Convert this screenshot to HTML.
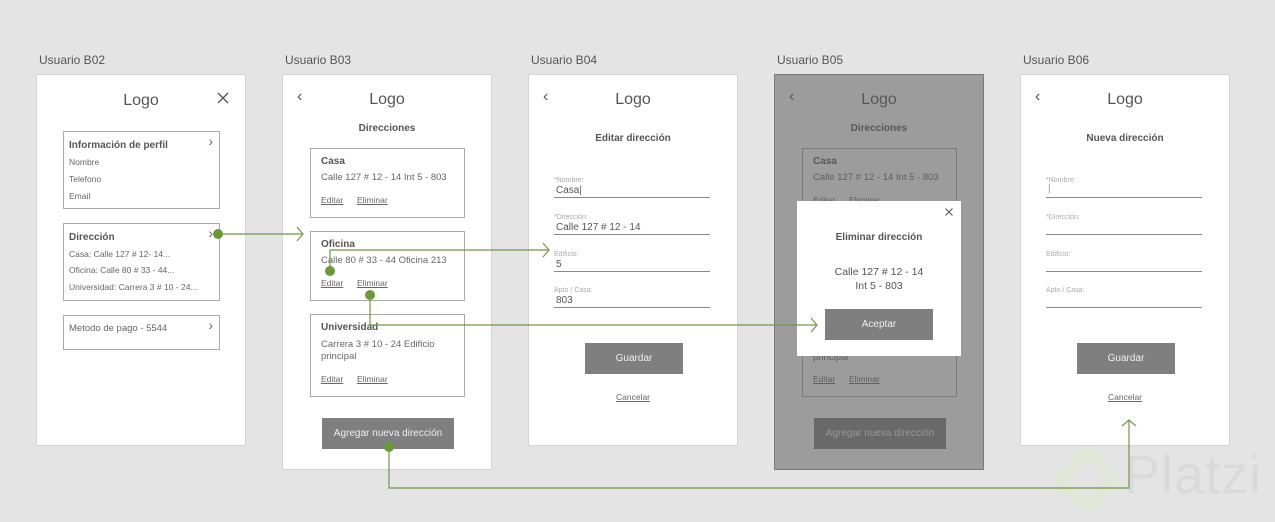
<!DOCTYPE html>
<html><head><meta charset="utf-8"><style>
*{margin:0;padding:0;box-sizing:border-box}
body{width:1275px;height:522px;background:#e4e4e4;font-family:"Liberation Sans",sans-serif;color:#555;position:relative;overflow:hidden}
.a{position:absolute}
.scr{position:absolute;background:#fff;border:1px solid #d4d4d4;width:210px}
.ttl{position:absolute;font-size:12px;color:#555;top:53px}
.logo{position:absolute;width:100%;text-align:center;font-size:16px;color:#555;top:16px}
.back{position:absolute;left:14px;top:13px;font-size:16px;color:#555}
.h{position:absolute;width:100%;text-align:center;font-size:10px;font-weight:bold;color:#555}
.card{position:absolute;border:1px solid #aaa;background:#fff}
.card b{position:absolute;font-size:10px;color:#555}
.t{position:absolute;font-size:9.5px;color:#666;white-space:nowrap}
.s{position:absolute;font-size:8.5px;color:#666;white-space:nowrap}
.u{text-decoration:underline;font-size:8.5px}
.btn{position:absolute;background:#7f7f7f;color:#eee;font-size:10px;text-align:center}
.f{position:absolute;left:25px;width:156px;border-bottom:1px solid #888;height:20px}
.f .l{position:absolute;left:0;top:-1px;font-size:7px;color:#aaa}
.f .v{position:absolute;left:2px;top:7px;font-size:10px;color:#555}
.chev{position:absolute;font-size:14px;color:#666;right:6px;top:1px}
</style></head><body>
<div class="ttl" style="left:39px">Usuario B02</div>
<div class="ttl" style="left:285px">Usuario B03</div>
<div class="ttl" style="left:531px">Usuario B04</div>
<div class="ttl" style="left:777px">Usuario B05</div>
<div class="ttl" style="left:1023px">Usuario B06</div>

<!-- B02 -->
<div class="scr" style="left:36px;top:74px;height:372px">
 <div class="logo" style="top:17px">Logo</div>
 <svg class="a" style="left:180px;top:17px" width="12" height="12"><path d="M1 1L11 11M11 1L1 11" stroke="#555" stroke-width="1.3"/></svg>
 <div class="card" style="left:26px;top:56px;width:157px;height:78px">
  <b style="left:5px;top:8px">Información de perfil</b><span class="chev">›</span>
  <div class="s" style="left:5px;top:25px">Nombre</div>
  <div class="s" style="left:5px;top:42px">Telefono</div>
  <div class="s" style="left:5px;top:59px">Email</div>
 </div>
 <div class="card" style="left:26px;top:148px;width:157px;height:78px">
  <b style="left:5px;top:8px">Dirección</b><span class="chev">›</span>
  <div class="s" style="left:5px;top:25px">Casa: Calle 127 # 12- 14...</div>
  <div class="s" style="left:5px;top:41px">Oficina: Calle 80 # 33 - 44...</div>
  <div class="s" style="left:5px;top:58px">Universidad: Carrera 3 # 10 - 24...</div>
 </div>
 <div class="card" style="left:26px;top:240px;width:157px;height:35px">
  <div class="t" style="left:5px;top:7px">Metodo de pago - 5544</div><span class="chev">›</span>
 </div>
</div>

<!-- B03 -->
<div class="scr" style="left:282px;top:74px;height:396px">
 <div class="back">‹</div><div class="logo">Logo</div>
 <div class="h" style="top:48px">Direcciones</div>
 <div class="card" style="left:27px;top:73px;width:155px;height:70px"><b style="left:10px;top:7px">Casa</b><div class="t" style="left:10px;top:23px">Calle 127 # 12 - 14 Int 5 - 803</div><div class="s u" style="left:10px;top:46px">Editar</div><div class="s u" style="left:46px;top:46px">Eliminar</div></div>
 <div class="card" style="left:27px;top:156px;width:155px;height:70px"><b style="left:10px;top:7px">Oficina</b><div class="t" style="left:10px;top:23px">Calle 80 # 33 - 44 Oficina 213</div><div class="s u" style="left:10px;top:46px">Editar</div><div class="s u" style="left:46px;top:46px">Eliminar</div></div>
 <div class="card" style="left:27px;top:239px;width:155px;height:83px"><b style="left:10px;top:7px">Universidad</b><div class="t" style="left:10px;top:24px">Carrera 3 # 10 - 24 Edificio</div><div class="t" style="left:10px;top:36px">principal</div><div class="s u" style="left:10px;top:59px">Editar</div><div class="s u" style="left:46px;top:59px">Eliminar</div></div>
 <div class="btn" style="left:39px;top:343px;width:132px;height:31px;line-height:31px">Agregar nueva dirección</div>
</div>

<!-- B04 -->
<div class="scr" style="left:528px;top:74px;height:372px">
 <div class="back">‹</div><div class="logo">Logo</div>
 <div class="h" style="top:58px">Editar dirección</div>
 <div class="f" style="top:103px"><span class="l">*Nombre:</span><span class="v">Casa|</span></div>
 <div class="f" style="top:140px"><span class="l">*Dirección:</span><span class="v">Calle 127 # 12 - 14</span></div>
 <div class="f" style="top:177px"><span class="l">Edificio:</span><span class="v">5</span></div>
 <div class="f" style="top:213px"><span class="l">Apto / Casa:</span><span class="v">803</span></div>
 <div class="btn" style="left:56px;top:268px;width:98px;height:31px;line-height:31px">Guardar</div>
 <div class="s u" style="left:0;width:100%;text-align:center;top:317px">Cancelar</div>
</div>

<!-- B05 -->
<div class="scr" style="left:774px;top:74px;height:396px;border-color:#aaa">
 <div class="back">‹</div><div class="logo">Logo</div>
 <div class="h" style="top:48px">Direcciones</div>
 <div class="card" style="left:27px;top:73px;width:155px;height:70px"><b style="left:10px;top:7px">Casa</b><div class="t" style="left:10px;top:23px">Calle 127 # 12 - 14 Int 5 - 803</div><div class="s u" style="left:10px;top:46px">Editar</div><div class="s u" style="left:46px;top:46px">Eliminar</div></div>
 <div class="card" style="left:27px;top:156px;width:155px;height:166px"><div class="t" style="left:10px;top:120px">principal</div><div class="s u" style="left:10px;top:142px">Editar</div><div class="s u" style="left:46px;top:142px">Eliminar</div></div>
 <div class="btn" style="left:39px;top:343px;width:132px;height:31px;line-height:31px">Agregar nueva dirección</div>
 <div class="a" style="left:-1px;top:-1px;width:210px;height:396px;background:rgba(90,90,90,0.6)"></div>
</div>
<div class="a" style="left:797px;top:201px;width:164px;height:155px;background:#fff">
 <svg class="a" style="left:148px;top:7px" width="8" height="8"><path d="M0.5 0.5L7.5 7.5M7.5 0.5L0.5 7.5" stroke="#555" stroke-width="1.1"/></svg>
 <div class="h" style="top:31px">Eliminar dirección</div>
 <div class="a" style="width:100%;text-align:center;top:64px;font-size:10.5px;color:#555;line-height:14px">Calle 127 # 12 - 14<br>Int 5 - 803</div>
 <div class="btn" style="left:28px;top:108px;width:108px;height:31px;line-height:31px">Aceptar</div>
</div>

<!-- B06 -->
<div class="scr" style="left:1020px;top:74px;height:372px">
 <div class="back">‹</div><div class="logo">Logo</div>
 <div class="h" style="top:58px">Nueva dirección</div>
 <div class="f" style="top:103px"><span class="l">*Nombre:</span><span class="v" style="top:5px;color:#999">|</span></div>
 <div class="f" style="top:140px"><span class="l">*Dirección:</span></div>
 <div class="f" style="top:177px"><span class="l">Edificio:</span></div>
 <div class="f" style="top:213px"><span class="l">Apto / Casa:</span></div>
 <div class="btn" style="left:56px;top:268px;width:98px;height:31px;line-height:31px">Guardar</div>
 <div class="s u" style="left:0;width:100%;text-align:center;top:317px">Cancelar</div>
</div>

<!-- Platzi watermark -->
<svg class="a" style="left:1045px;top:440px" width="90" height="82"><path d="M42 12 L70 40 L42 68 L14 40 Z" fill="none" stroke="#e1e6d8" stroke-width="12" stroke-linejoin="round"/></svg>
<div class="a" style="left:1124px;top:444px;font-size:54px;color:#dadada;letter-spacing:1px">Platzi</div>

<!-- connectors -->
<svg class="a" style="left:0;top:0" width="1275" height="522">
 <g stroke="#6e9a45" stroke-width="1.2" fill="none">
  <path d="M217 234 H302 M297 227 L303 234 L297 241"/>
  <path d="M330 271 V250 H548 M543 243 L549 250 L543 257"/>
  <path d="M370 295 V325 H816 M811 318 L817 325 L811 332"/>
  <path d="M389 447 V488 H1129 V420 M1122 426 L1129 420 L1136 426"/>
 </g>
 <g fill="#6a9a35">
  <circle cx="218" cy="234" r="5"/><circle cx="330" cy="271" r="5"/><circle cx="370" cy="295" r="5"/><circle cx="389" cy="447" r="5"/>
 </g>
</svg>
</body></html>
